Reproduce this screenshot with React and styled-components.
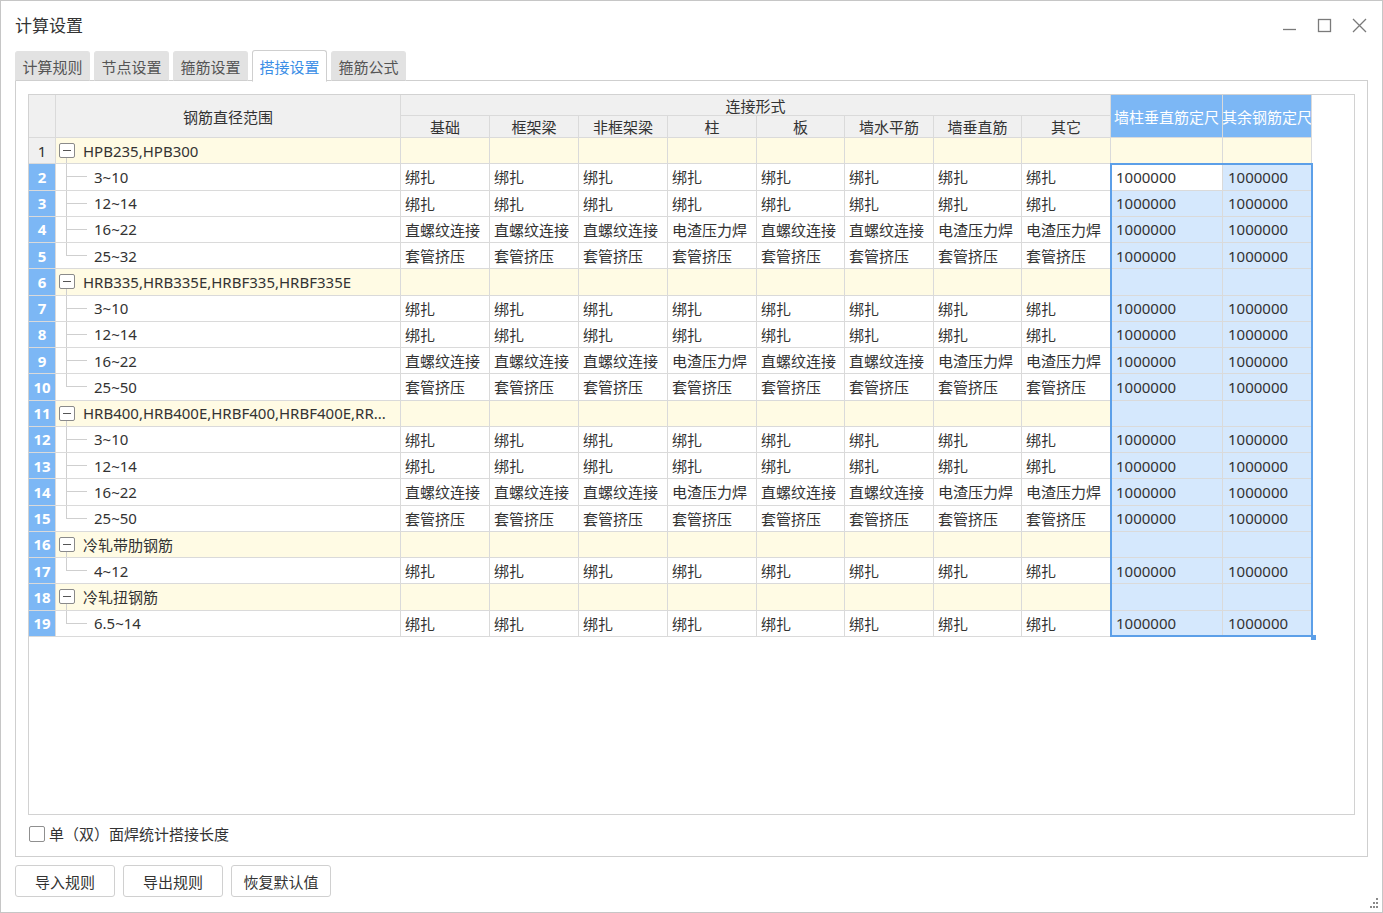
import React from 'react';
import styled, { createGlobalStyle } from 'styled-components';

const GlobalStyle = createGlobalStyle`
  html, body {
    margin: 0;
    padding: 0;
    background: #fff;
  }
  body {
    font-family: "Noto Sans", "Noto Sans CJK SC", sans-serif;
    font-size: 15px;
    color: #333;
  }
`;

const Window = styled.div`
  position: relative;
  box-sizing: border-box;
  width: 1383px;
  height: 913px;
  border: 1px solid #c6c6c6;
  background: #fff;
  display: flex;
  flex-direction: column;
`;

const TitleBar = styled.div`
  height: 48px;
  display: flex;
  align-items: center;
  justify-content: space-between;
  padding: 0 15px 0 14px;
`;

const Title = styled.div`
  font-size: 17px;
  color: #333;
  padding-bottom: 2px;
`;

const Controls = styled.div`
  display: flex;
  align-items: center;
  gap: 20px;
  color: #7a7a7a;
`;

const TabStrip = styled.div`
  display: flex;
  align-items: flex-end;
  gap: 4px;
  margin-left: 14px;
  height: 32px;
  position: relative;
  z-index: 1;
`;

const Tab = styled.div`
  box-sizing: border-box;
  height: ${p => (p.$active ? '32px' : '30px')};
  padding: 0 6.5px;
  display: flex;
  align-items: center;
  border-radius: 3px 3px 0 0;
  font-size: 15px;
  color: ${p => (p.$active ? '#3a8ee6' : '#555')};
  background: ${p => (p.$active ? '#fff' : '#e2e2e2')};
  border: 1px solid ${p => (p.$active ? '#cfcfcf' : '#e2e2e2')};
  border-bottom: ${p => (p.$active ? '1px solid #fff' : '1px solid #cfcfcf')};
  margin-bottom: ${p => (p.$active ? '-1px' : '0')};
`;

const Panel = styled.div`
  box-sizing: border-box;
  margin: -1px 14px 0 14px;
  height: 777px;
  border: 1px solid #cfcfcf;
  padding: 13px 12px 0 12px;
  display: flex;
  flex-direction: column;
`;

const GridBox = styled.div`
  box-sizing: border-box;
  height: 721px;
  border: 1px solid #d2d2d2;
  background: #fff;
`;

const GridWrap = styled.div`
  position: relative;
  width: max-content;
`;

const Grid = styled.div`
  display: grid;
  grid-template-columns: 27px 345px 89px 89px 89px 89px 88px 89px 88px 89px 112px 89px;
  grid-template-rows: 21px 22px;
  grid-auto-rows: 26.25px;
`;

const Cell = styled.div`
  box-sizing: border-box;
  border-right: 1px solid #dadada;
  border-bottom: 1px solid #dadada;
  background: ${p => p.$bg || '#fff'};
  display: flex;
  align-items: center;
  padding: 0 ${p => p.$pad || 4}px 0;
  overflow: hidden;
  white-space: nowrap;
  color: #333;
  font-size: 15px;
`;

const HeadCell = styled(Cell)`
  justify-content: center;
  padding: 0;
  background: ${p => p.$bg || '#f0f0f0'};
  color: ${p => p.$fg || '#333'};
  grid-row: ${p => (p.$rows ? `span ${p.$rows}` : 'auto')};
  grid-column: ${p => (p.$cols ? `span ${p.$cols}` : 'auto')};
`;

const NumCell = styled(Cell)`
  justify-content: center;
  padding: 0;
  background: ${p => (p.$sel ? '#7cb7f5' : '#f0f0f0')};
  color: ${p => (p.$sel ? '#fff' : '#333')};
  font-weight: ${p => (p.$sel ? 700 : 400)};
`;

const NameCell = styled(Cell)`
  padding: 0;
  align-items: stretch;
`;

const GroupLabel = styled.div`
  display: flex;
  align-items: center;
  gap: 8px;
  padding-left: 3px;
`;

const Toggle = styled.span`
  position: relative;
  box-sizing: border-box;
  width: 16px;
  height: 15px;
  border: 1px solid #8a8a8a;
  border-radius: 2px;
  background: #fff;
  display: flex;
  align-items: center;
  justify-content: center;
  &::before {
    content: '';
    width: 8px;
    height: 1px;
    background: #555;
  }
  &::after {
    content: '';
    position: absolute;
    left: 6px;
    top: 14px;
    width: 1px;
    height: 7px;
    background: #cfcfcf;
  }
`;

const Guide = styled.div`
  display: flex;
  flex-direction: column;
  margin-left: 10px;
  width: 21px;
`;

const GuideTop = styled.div`
  flex: 1;
  border-left: 1px solid #cfcfcf;
  border-bottom: 1px solid #cfcfcf;
`;

const GuideBottom = styled.div`
  flex: 1;
  border-left: 1px solid ${p => (p.$last ? 'transparent' : '#cfcfcf')};
`;

const ChildText = styled.div`
  display: flex;
  align-items: center;
  padding-left: 7px;
`;

const Selection = styled.div`
  position: absolute;
  left: 1081px;
  top: 68px;
  width: 203px;
  height: 474px;
  box-sizing: border-box;
  border: 2px solid #5c9fe8;
  pointer-events: none;
  &::after {
    content: '';
    position: absolute;
    right: -5px;
    bottom: -5px;
    width: 5px;
    height: 5px;
    background: #5c9fe8;
  }
`;

const CheckRow = styled.label`
  display: flex;
  align-items: center;
  gap: 4px;
  height: 37px;
  padding-left: 1px;
  font-size: 15px;
  color: #333;
`;

const Box = styled.span`
  box-sizing: border-box;
  width: 16px;
  height: 16px;
  border: 1px solid #8f8f8f;
  border-radius: 2px;
  background: #fff;
`;

const Footer = styled.div`
  display: flex;
  gap: 8px;
  margin: 8px 0 0 14px;
`;

const Button = styled.button`
  box-sizing: border-box;
  width: ${p => p.$w || 100}px;
  height: 32px;
  border: 1px solid #d0d0d0;
  border-radius: 3px;
  background: #fff;
  font-family: "Noto Sans", "Noto Sans CJK SC", sans-serif;
  font-size: 15px;
  color: #333;
  padding: 0;
`;

const Grip = styled.svg`
  position: absolute;
  right: 3px;
  bottom: 3px;
`;

const colHeads = ['基础', '框架梁', '非框架梁', '柱', '板', '墙水平筋', '墙垂直筋', '其它'];
const B = Array(8).fill('绑扎');
const S = ['直螺纹连接', '直螺纹连接', '直螺纹连接', '电渣压力焊', '直螺纹连接', '直螺纹连接', '电渣压力焊', '电渣压力焊'];
const T = Array(8).fill('套管挤压');

const groups = [
  { name: 'HPB235,HPB300', items: [['3~10', B], ['12~14', B], ['16~22', S], ['25~32', T]] },
  { name: 'HRB335,HRB335E,HRBF335,HRBF335E', items: [['3~10', B], ['12~14', B], ['16~22', S], ['25~50', T]] },
  { name: 'HRB400,HRB400E,HRBF400,HRBF400E,RR...', items: [['3~10', B], ['12~14', B], ['16~22', S], ['25~50', T]] },
  { name: '冷轧带肋钢筋', items: [['4~12', B]] },
  { name: '冷轧扭钢筋', items: [['6.5~14', B]] },
];

function buildRows() {
  const rows = [];
  groups.forEach(g => {
    rows.push({ type: 'group', name: g.name });
    g.items.forEach(([range, vals], i) => {
      rows.push({ type: 'item', name: range, vals, last: i === g.items.length - 1 });
    });
  });
  return rows;
}

export default function App() {
  const rows = buildRows();

  return (
    <Window>
      <GlobalStyle />
      <TitleBar>
        <Title>计算设置</Title>
        <Controls>
          <svg width="15" height="15" viewBox="0 0 15 15">
            <line x1="1" y1="11.5" x2="14" y2="11.5" stroke="currentColor" strokeWidth="1.3" />
          </svg>
          <svg width="15" height="15" viewBox="0 0 15 15">
            <rect x="1.5" y="1.5" width="12" height="12" fill="none" stroke="currentColor" strokeWidth="1.3" />
          </svg>
          <svg width="15" height="15" viewBox="0 0 15 15">
            <path d="M1 1 L14 14 M14 1 L1 14" stroke="currentColor" strokeWidth="1.3" />
          </svg>
        </Controls>
      </TitleBar>

      <TabStrip>
        <Tab>计算规则</Tab>
        <Tab>节点设置</Tab>
        <Tab>箍筋设置</Tab>
        <Tab $active>搭接设置</Tab>
        <Tab>箍筋公式</Tab>
      </TabStrip>

      <Panel>
        <GridBox>
          <GridWrap>
            <Grid>
              <HeadCell $rows={2} />
              <HeadCell $rows={2}>钢筋直径范围</HeadCell>
              <HeadCell $cols={8}>连接形式</HeadCell>
              <HeadCell $rows={2} $bg="#7cb7f5" $fg="#fff">墙柱垂直筋定尺</HeadCell>
              <HeadCell $rows={2} $bg="#7cb7f5" $fg="#fff">其余钢筋定尺</HeadCell>
              {colHeads.map(h => (
                <HeadCell key={h}>{h}</HeadCell>
              ))}

              {rows.map((r, idx) => {
                const n = idx + 1;
                const isGroup = r.type === 'group';
                const rowBg = isGroup ? '#fffbe4' : '#fff';
                const sel = n >= 2;
                const selBg = n === 2 ? '#fff' : '#d5e8fd';
                return (
                  <React.Fragment key={n}>
                    <NumCell $sel={sel}>{n}</NumCell>
                    <NameCell $bg={rowBg}>
                      {isGroup ? (
                        <GroupLabel>
                          <Toggle />
                          <span>{r.name}</span>
                        </GroupLabel>
                      ) : (
                        <>
                          <Guide>
                            <GuideTop />
                            <GuideBottom $last={r.last} />
                          </Guide>
                          <ChildText>{r.name}</ChildText>
                        </>
                      )}
                    </NameCell>
                    {Array.from({ length: 8 }).map((_, c) => (
                      <Cell key={c} $bg={rowBg}>
                        {isGroup ? '' : r.vals[c]}
                      </Cell>
                    ))}
                    <Cell $bg={sel ? selBg : rowBg} $pad={5}>
                      {isGroup ? '' : '1000000'}
                    </Cell>
                    <Cell $bg={sel ? '#d5e8fd' : rowBg} $pad={5}>
                      {isGroup ? '' : '1000000'}
                    </Cell>
                  </React.Fragment>
                );
              })}
            </Grid>
            <Selection />
          </GridWrap>
        </GridBox>

        <CheckRow>
          <Box />
          单（双）面焊统计搭接长度
        </CheckRow>
      </Panel>

      <Footer>
        <Button>导入规则</Button>
        <Button>导出规则</Button>
        <Button>恢复默认值</Button>
      </Footer>

      <Grip width="12" height="12" viewBox="0 0 12 12">
        {[
          [9, 1],
          [6, 5], [9, 5],
          [3, 9], [6, 9], [9, 9],
        ].map(([x, y]) => (
          <rect key={`${x}-${y}`} x={x} y={y} width="2" height="2" fill="#8a8a8a" />
        ))}
      </Grip>
    </Window>
  );
}
